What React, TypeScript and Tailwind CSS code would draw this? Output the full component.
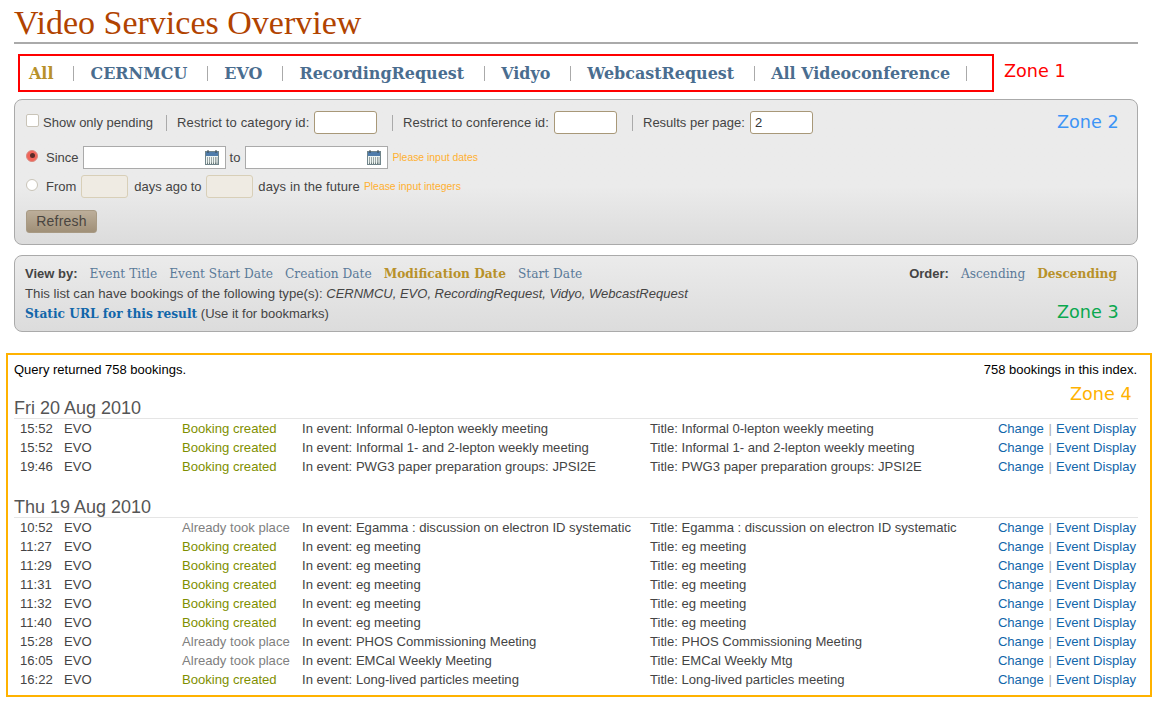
const sans = "font-['Liberation_Sans',Arial,sans-serif]";
const serif = "font-['DejaVu_Serif',serif]";
const zoneLabel = "absolute font-['DejaVu_Sans',sans-serif] text-[17.6px] leading-[22px]";

const tabs = ['All', 'CERNMCU', 'EVO', 'RecordingRequest', 'Vidyo', 'WebcastRequest', 'All Videoconference'];

type Booking = { time: string; status: string; event: string; title: string };

const bc = 'Booking created';
const atp = 'Already took place';

const groups: { date: string; rows: Booking[] }[] = [
  {
    date: 'Fri 20 Aug 2010',
    rows: [
      { time: '15:52', status: bc, event: 'Informal 0-lepton weekly meeting', title: 'Informal 0-lepton weekly meeting' },
      { time: '15:52', status: bc, event: 'Informal 1- and 2-lepton weekly meeting', title: 'Informal 1- and 2-lepton weekly meeting' },
      { time: '19:46', status: bc, event: 'PWG3 paper preparation groups: JPSI2E', title: 'PWG3 paper preparation groups: JPSI2E' },
    ],
  },
  {
    date: 'Thu 19 Aug 2010',
    rows: [
      { time: '10:52', status: atp, event: 'Egamma : discussion on electron ID systematic', title: 'Egamma : discussion on electron ID systematic' },
      { time: '11:27', status: bc, event: 'eg meeting', title: 'eg meeting' },
      { time: '11:29', status: bc, event: 'eg meeting', title: 'eg meeting' },
      { time: '11:31', status: bc, event: 'eg meeting', title: 'eg meeting' },
      { time: '11:32', status: bc, event: 'eg meeting', title: 'eg meeting' },
      { time: '11:40', status: bc, event: 'eg meeting', title: 'eg meeting' },
      { time: '15:28', status: atp, event: 'PHOS Commissioning Meeting', title: 'PHOS Commissioning Meeting' },
      { time: '16:05', status: atp, event: 'EMCal Weekly Meeting', title: 'EMCal Weekly Mtg' },
      { time: '16:22', status: bc, event: 'Long-lived particles meeting', title: 'Long-lived particles meeting' },
    ],
  },
];

function CalendarIcon() {
  return (
    <svg width="14" height="15" viewBox="0 0 14 15" className="shrink-0">
      <rect x="0.5" y="1.5" width="13" height="13" fill="#eef5f3" stroke="#70848a" />
      <rect x="1" y="2" width="12" height="4" fill="#4f7cab" />
      <rect x="2.5" y="0" width="1" height="3" fill="#33424f" />
      <rect x="10.5" y="0" width="1" height="3" fill="#33424f" />
      <g fill="#4a5a5a">
        {[7.5, 9.5, 11.5, 12.8].map((y) =>
          [2, 4, 6, 8, 10, 11.5].map((x) => <rect key={`${x}-${y}`} x={x} y={y} width="1" height="1" />)
        )}
      </g>
    </svg>
  );
}

function DateInput() {
  return (
    <div className="w-[143px] h-[23px] bg-white border border-[#aaaaaa] flex items-center justify-end pr-[6px]">
      <CalendarIcon />
    </div>
  );
}

function TextBox({ value }: { value?: string }) {
  return (
    <div className="w-[63px] h-[23px] bg-white border border-[#a89878] rounded-[3px] flex items-center pl-[4px] text-[13px] text-[#333]">
      {value}
    </div>
  );
}

function Sep({ className }: { className: string }) {
  return <div className={`w-px h-[16px] bg-[#aaaaaa] shrink-0 ${className}`} />;
}

function Radio({ on }: { on?: boolean }) {
  return (
    <div
      className={
        on
          ? 'w-[12px] h-[12px] -mt-[4px] rounded-full border border-[#d98a80] bg-[#f0655a] flex items-center justify-center shrink-0'
          : 'w-[12px] h-[12px] -mt-[4px] rounded-full border border-[#c9c4b8] bg-white shrink-0'
      }
    >
      {on && <div className="w-[5px] h-[5px] rounded-full bg-[#5a2a28]" />}
    </div>
  );
}

function Row({ b }: { b: Booking }) {
  return (
    <div className="grid grid-cols-[44px_118px_120px_348px_1fr_auto] h-[19px] items-center pl-[6px] pr-[2px] text-[13.1px] text-[#444]">
      <span>{b.time}</span>
      <span>EVO</span>
      <span className={b.status === bc ? 'text-[#7f8f00]' : 'text-[#808080]'}>{b.status}</span>
      <span>In event: {b.event}</span>
      <span>Title: {b.title}</span>
      <span className="text-[#1166aa]">
        Change <span className="text-[#aaa] ml-px mr-[0.5px]">|</span> Event Display
      </span>
    </div>
  );
}

export default function App() {
  return (
    <div className={`relative w-[1175px] h-[703px] overflow-hidden bg-white px-[14px] ${sans}`}>
      <h1 className="h-[44px] w-[1124px] border-b-2 border-[#aaaaaa] font-['Liberation_Serif',serif] text-[34px] leading-[46px] text-[#b14300]">
        Video Services Overview
      </h1>

      {/* Zone 1 */}
      <div className={`mt-[10px] ml-[4px] w-[976px] h-[38px] border-2 border-[#ff0000] flex items-center pl-[9px] pt-[2px] text-[15.95px] font-bold whitespace-nowrap ${serif}`}>
        {tabs.map((t, i) => (
          <div key={t} className="flex items-center">
            <span className={i === 0 ? 'text-[#b8912a]' : 'text-[#4a6d8f]'}>{t}</span>
            <div className={`w-px h-[15px] bg-[#aaaaaa] mr-[16px] ${i === 6 ? 'ml-[16px]' : 'ml-[20px]'}`} />
          </div>
        ))}
      </div>

      {/* Zone 2 */}
      <div className="mt-[7px] w-[1124px] h-[146px] rounded-[8px] border border-[#aaaaaa] bg-linear-to-b from-[#ebebeb] from-60% to-[#dcdcdc] pl-[11px] pt-[11px] text-[13px] text-[#444]">
        <div className="flex items-center h-[23px]">
          <div className="w-[13px] h-[13px] rounded-[2px] border border-[#c9c4b8] bg-white -mt-[5px]" />
          <span className="ml-[4px] w-[123px]">Show only pending</span>
          <Sep className="mr-[10px]" />
          <span className="mr-[5px] w-[132px] tracking-[0.13px] whitespace-nowrap">Restrict to category id:</span>
          <TextBox />
          <Sep className="ml-[15px] mr-[10px]" />
          <span className="mr-[5px] w-[146px] tracking-[0.08px] whitespace-nowrap">Restrict to conference id:</span>
          <TextBox />
          <Sep className="ml-[15px] mr-[10px]" />
          <span className="mr-[5px] w-[102px] whitespace-nowrap">Results per page:</span>
          <TextBox value="2" />
        </div>
        <div className="flex items-center h-[23px] mt-[12px]">
          <Radio on />
          <span className="ml-[8px] mr-[4px]">Since</span>
          <DateInput />
          <span className="ml-[4px] mr-[5px]">to</span>
          <DateInput />
          <span className="ml-[4px] mt-px text-[10.4px] text-[#ffb030]">Please input dates</span>
        </div>
        <div className="flex items-center h-[23px] mt-[6px]">
          <Radio />
          <span className="ml-[8px] mr-[5px]">From</span>
          <div className="w-[47px] h-[23px] rounded-[3px] border border-[#d8cfb8] bg-[#efebe3]" />
          <span className="mx-[6px] w-[66px] whitespace-nowrap">days ago to</span>
          <div className="w-[47px] h-[23px] rounded-[3px] border border-[#d8cfb8] bg-[#efebe3]" />
          <span className="ml-[5px] tracking-[0.1px]">days in the future</span>
          <span className="ml-[4px] mt-px text-[10.4px] text-[#ffb030]">Please input integers</span>
        </div>
        <div className="mt-[12px] w-[71px] h-[23px] rounded-[3px] border border-[#a89a84] bg-linear-to-b from-[#bcae9a] to-[#a09078] flex items-center justify-center text-[14px] tracking-[0.2px] text-[#4a4540]">
          Refresh
        </div>
      </div>

      {/* Zone 3 */}
      <div className="mt-[10px] w-[1124px] h-[77px] rounded-[8px] border border-[#aaaaaa] bg-linear-to-b from-[#ebebeb] to-[#dcdcdc] px-[10px] pt-[8px] text-[13px] text-[#444]">
        <div className="flex items-center h-[20px]">
          <span className="font-bold mr-[12px]">View by:</span>
          <div className={`flex gap-[12px] text-[12.2px] text-[#5a7a99] ${serif}`}>
            <span>Event Title</span>
            <span>Event Start Date</span>
            <span>Creation Date</span>
            <span className="font-bold text-[#b8912a]">Modification Date</span>
            <span>Start Date</span>
          </div>
          <span className="ml-auto font-bold mr-[12px]">Order:</span>
          <div className={`flex gap-[12px] text-[12.2px] text-[#5a7a99] mr-[10px] ${serif}`}>
            <span>Ascending</span>
            <span className="font-bold text-[#b8912a]">Descending</span>
          </div>
        </div>
        <div className="h-[20px] leading-[20px] text-[13.2px]">
          This list can have bookings of the following type(s): <i className="text-[13px]">CERNMCU, EVO, RecordingRequest, Vidyo, WebcastRequest</i>
        </div>
        <div className="h-[20px] leading-[20px]">
          <span className={`font-bold text-[12.2px] text-[#1166aa] ${serif}`}>Static URL for this result</span> (Use it for bookmarks)
        </div>
      </div>

      {/* Zone 4 */}
      <div className="mt-[21px] -ml-[8px] w-[1146px] h-[344px] border-2 border-[#ffb200] pl-[6px] pr-[12px] pt-[5px] text-[13px]">
        <div className="flex justify-between h-[19px] items-center text-black pr-px">
          <span>Query returned 758 bookings.</span>
          <span>758 bookings in this index.</span>
        </div>
        {groups.map((g, i) => (
          <div key={g.date} className={i === 0 ? 'mt-[19px]' : 'mt-[21px]'}>
            <div className="h-[21px] border-b border-[#e5e5e5] text-[18px] leading-[20px] text-[#555]">{g.date}</div>
            {g.rows.map((b, j) => (
              <Row key={j} b={b} />
            ))}
          </div>
        ))}
      </div>

      <span className={`${zoneLabel} left-[1004px] top-[60px] text-[#ff0000]`}>Zone 1</span>
      <span className={`${zoneLabel} left-[1057px] top-[111px] text-[#3d94f6]`}>Zone 2</span>
      <span className={`${zoneLabel} left-[1057px] top-[301px] text-[#0aa84f]`}>Zone 3</span>
      <span className={`${zoneLabel} left-[1070px] top-[383px] text-[#ffb200]`}>Zone 4</span>
    </div>
  );
}
